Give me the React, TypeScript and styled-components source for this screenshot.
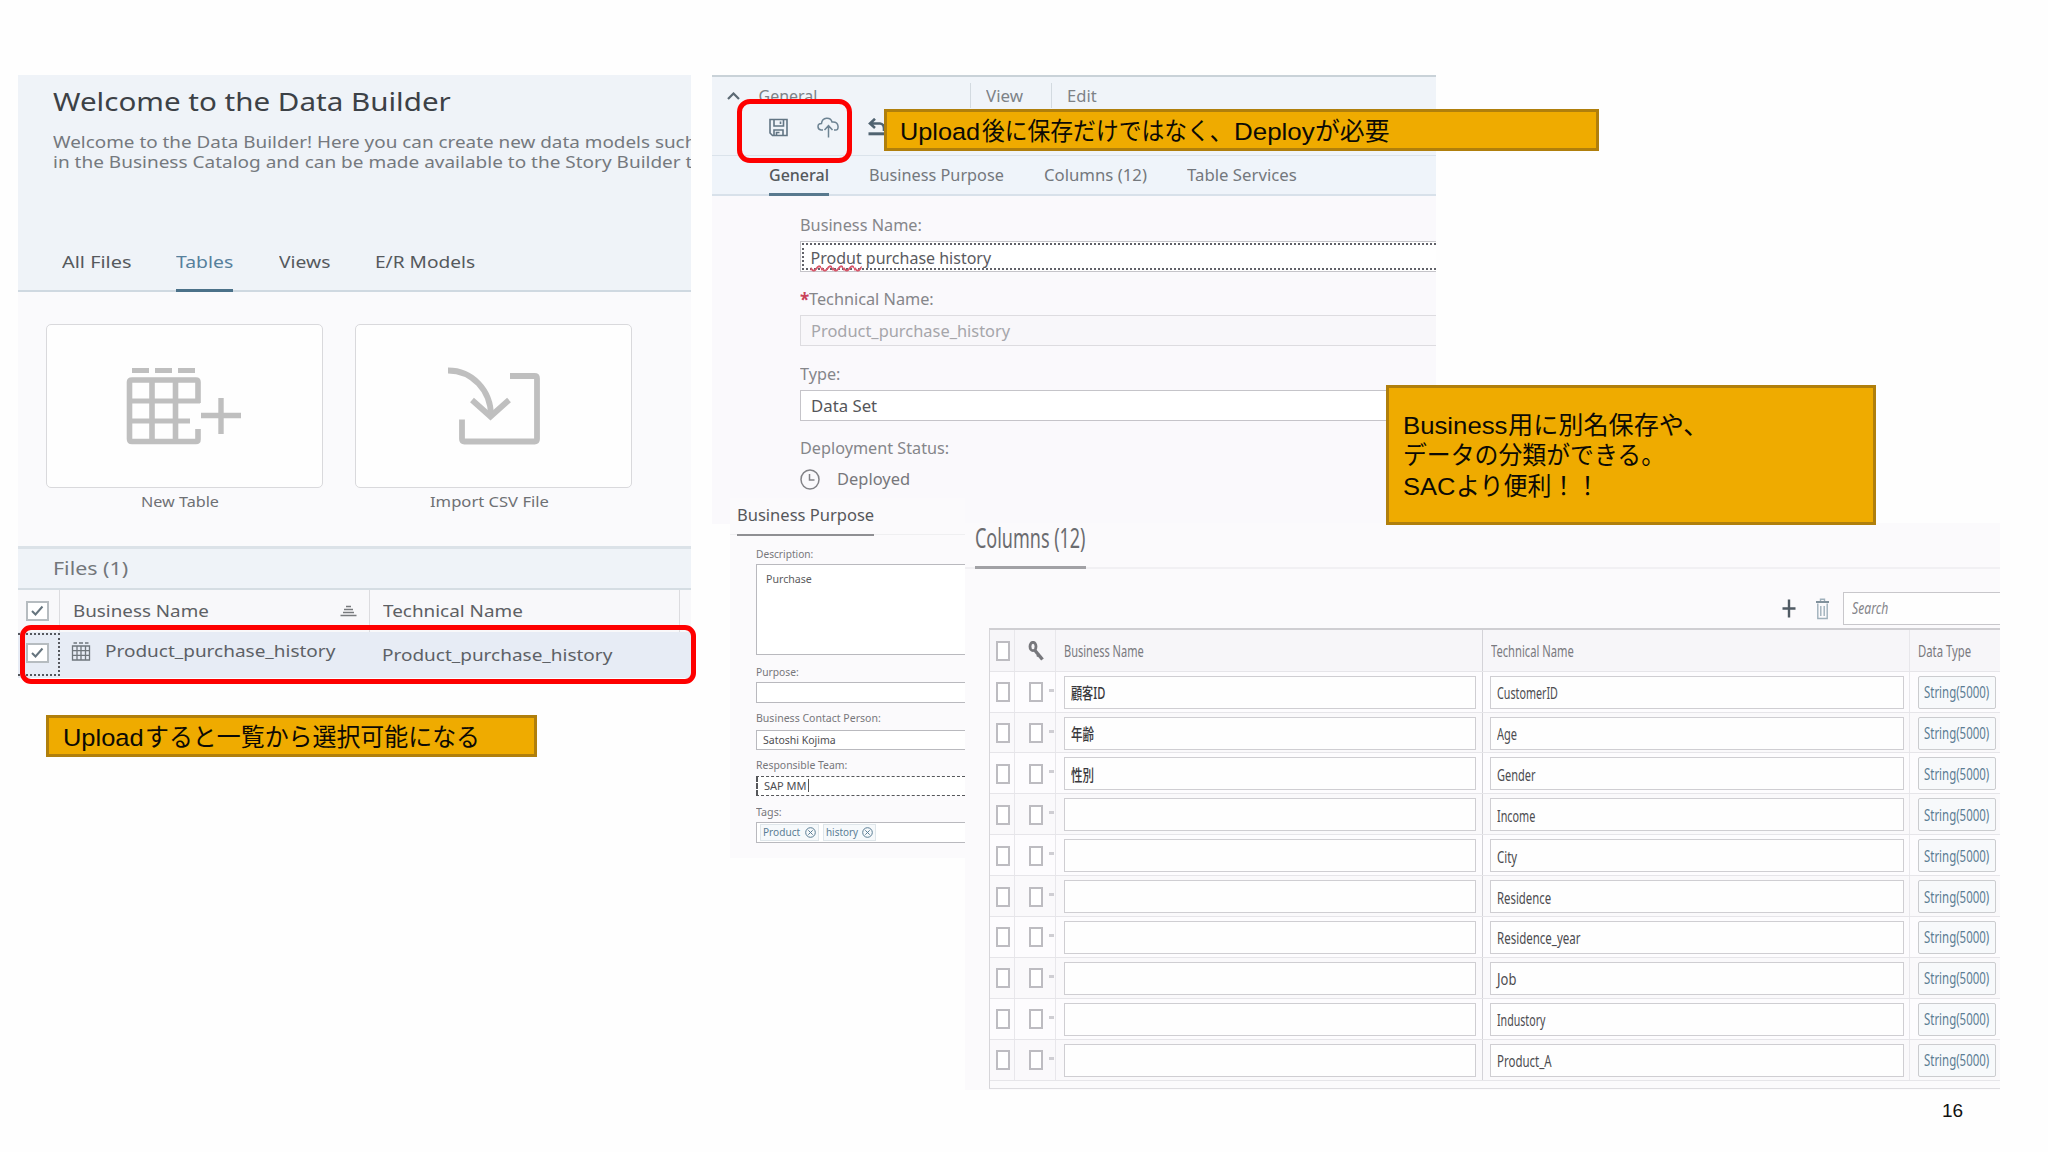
import React, { useLayoutEffect, useRef, useState } from "react";
import styled, { createGlobalStyle, css } from "styled-components";

const Global = createGlobalStyle`
  * { box-sizing: border-box; }
  html, body { margin: 0; padding: 0; background: #fefefe; overflow: hidden; }
`;

const UI_FONT = `"Noto Sans", "Noto Sans CJK JP", sans-serif`;
const NOTE_FONT = `"Liberation Sans", "Noto Sans CJK JP", sans-serif`;

/* ---------- stretched text ---------- */

const FitBox = styled.span<{ $w: number; $size: number; $lh: number; $color?: string; $weight?: number; $italic?: boolean }>`
  display: block;
  flex: none;
  width: ${(p) => p.$w}px;
  height: ${(p) => p.$lh}px;
  line-height: ${(p) => p.$lh}px;
  font-size: ${(p) => p.$size}px;
  font-weight: ${(p) => p.$weight ?? 400};
  font-style: ${(p) => (p.$italic ? "italic" : "normal")};
  ${(p) => p.$color && css`color: ${p.$color};`}
  white-space: nowrap;
`;

const FitInner = styled.span`
  display: inline-block;
  transform-origin: 0 50%;
`;

type FitProps = { w: number; size: number; lh?: number; color?: string; weight?: number; italic?: boolean; children: React.ReactNode };

function Fit({ w, size, lh = 20, color, weight, italic, children }: FitProps) {
  const ref = useRef<HTMLSpanElement>(null);
  const [scale, setScale] = useState(1);
  useLayoutEffect(() => {
    if (ref.current) setScale(w / ref.current.offsetWidth);
  }, [w]);
  return (
    <FitBox $w={w} $size={size} $lh={lh} $color={color} $weight={weight} $italic={italic}>
      <FitInner ref={ref} style={{ transform: `scaleX(${scale})` }}>{children}</FitInner>
    </FitBox>
  );
}

/* ---------- slide canvas ---------- */

const Slide = styled.main`
  position: relative;
  width: 2048px;
  height: 1152px;
  overflow: hidden;
  background: #fefefe;
  font-family: ${UI_FONT};
  color: #55585c;
`;

const Shot = styled.section<{ $x: number; $y: number; $w: number; $h: number; $bg?: string }>`
  position: absolute;
  left: ${(p) => p.$x}px;
  top: ${(p) => p.$y}px;
  width: ${(p) => p.$w}px;
  height: ${(p) => p.$h}px;
  background: ${(p) => p.$bg ?? "transparent"};
  overflow: hidden;
  display: flex;
  flex-direction: column;
`;

const RedFrame = styled.div<{ $x: number; $y: number; $w: number; $h: number; $r: number }>`
  position: absolute;
  left: ${(p) => p.$x}px;
  top: ${(p) => p.$y}px;
  width: ${(p) => p.$w}px;
  height: ${(p) => p.$h}px;
  border: 5px solid #fe0000;
  border-radius: ${(p) => p.$r}px;
`;

const Note = styled.div<{ $x: number; $y: number; $w: number; $h: number }>`
  position: absolute;
  left: ${(p) => p.$x}px;
  top: ${(p) => p.$y}px;
  width: ${(p) => p.$w}px;
  height: ${(p) => p.$h}px;
  padding: 3px 0 0 13.5px;
  display: flex;
  flex-direction: column;
  justify-content: center;
  background: #efab00;
  border: 3px solid #b07f0c;
  color: #0c0a05;
  font-family: ${NOTE_FONT};
`;

const NoteLine = styled.div`
  display: flex;
  align-items: center;
  gap: 1px;
  height: 30.6px;
`;

const PageNumber = styled.div`
  position: absolute;
  left: 1942px;
  top: 1100px;
  font: 19px/22px ${NOTE_FONT};
  color: #111;
`;

/* ---------- data builder ---------- */

const BuilderHead = styled.header`
  display: flex;
  flex-direction: column;
  height: 217px;
  padding: 8px 0 0 35px;
  background: #eff3f8;
  border-bottom: 2px solid #cfd9e1;
`;

const Intro = styled.div`
  margin-top: 12.5px;
`;

const BuilderTabs = styled.nav`
  display: flex;
  gap: 45.6px;
  margin: auto 0 -2px 9px;
`;

const BuilderTab = styled.div<{ $on?: boolean }>`
  height: 51px;
  border-bottom: 3px solid ${(p) => (p.$on ? "#4b7189" : "transparent")};
  color: ${(p) => (p.$on ? "#56809c" : "#55595d")};
`;

const Tiles = styled.div`
  display: flex;
  gap: 32px;
  height: 254px;
  padding: 32px 0 0 28.5px;
  background: #fafafc;
`;

const Tile = styled.div`
  display: flex;
  flex-direction: column;
  align-items: center;
  gap: 3.6px;
  width: 277px;
`;

const TileCard = styled.div`
  display: flex;
  align-items: center;
  justify-content: center;
  width: 100%;
  height: 164px;
  padding-right: 2px;
  background: #fefefe;
  border: 1.5px solid #d9d9dc;
  border-radius: 5px;
`;

const TileLabel = styled.div`
  margin-left: -8px;
`;

const FilesBar = styled.div`
  display: flex;
  align-items: center;
  height: 44px;
  padding: 0 0 2px 35px;
  background: #eff3f8;
  border-top: 3px solid #dbe2e8;
  border-bottom: 2px solid #d5dde3;
`;

const FileRow = styled.div<{ $selected?: boolean }>`
  display: grid;
  grid-template-columns: 42px 310px 310px 10px;
  height: ${(p) => (p.$selected ? 46 : 42)}px;
  background: ${(p) => (p.$selected ? "#e7ecf5" : "#f8f8fa")};
`;

const FileCell = styled.div<{ $line?: boolean; $pad?: number; $lift?: number; $focus?: boolean }>`
  display: flex;
  align-items: center;
  padding: 0 0 ${(p) => p.$lift ?? 0}px ${(p) => p.$pad ?? 0}px;
  border-right: 1px solid ${(p) => (p.$line ? "#dcdcdf" : "transparent")};
  ${(p) => p.$focus && css`
    height: 43px;
    margin-top: 1px;
    padding-bottom: 3px;
    border: 2px dotted #55585e;
    border-left: none;
  `}
`;

const Spacer = styled.i<{ $w: number }>`
  flex: none;
  width: ${(p) => p.$w}px;
`;

const FileCheck = styled.span`
  display: flex;
  align-items: center;
  justify-content: center;
  width: 23px;
  height: 20px;
  margin-left: 8px;
  background: #fff;
  border: 2px solid #b6bcc0;
`;

/* ---------- table editor ---------- */

const Ribbon = styled.div`
  height: 81px;
  background: #f0f4f9;
  border-top: 2px solid #c9d2d8;
  border-bottom: 1px solid #dbe3eb;
`;

const RibbonTitles = styled.div`
  display: flex;
  align-items: center;
  height: 37px;
  color: #7d8287;
`;

const RibbonGroup = styled.div<{ $w: number; $pad: number; $line?: boolean }>`
  display: flex;
  align-items: center;
  gap: 19px;
  width: ${(p) => p.$w}px;
  height: 25px;
  padding-left: ${(p) => p.$pad}px;
  border-left: 1px solid ${(p) => (p.$line ? "#d3dae0" : "transparent")};
`;

const RibbonTools = styled.div`
  display: flex;
  align-items: center;
  height: 26px;
  padding-left: 57px;
  gap: 29px;
`;

const EditorTabs = styled.nav`
  display: flex;
  gap: 40.2px;
  height: 39.5px;
  padding-left: 57.5px;
  background: #eff4fa;
  border-bottom: 2.5px solid #d8e1ea;
`;

const EditorTab = styled.div<{ $on?: boolean }>`
  height: 39.5px;
  padding-top: 0.5px;
  border-bottom: 3px solid ${(p) => (p.$on ? "#58798e" : "transparent")};
  color: ${(p) => (p.$on ? "#54585c" : "#74787d")};
`;

const Form = styled.div`
  padding: 18.8px 0 0 88px;
`;

const Field = styled.div`
  height: 74.2px;
  color: #85868a;
`;

const FieldLabel = styled.div`
  display: flex;
  margin-bottom: 5px;
`;

const Input = styled.div<{ $kind?: "focus" | "off" }>`
  display: flex;
  align-items: center;
  height: 31px;
  padding: 1px 0 0 10px;
  background: ${(p) => (p.$kind === "off" ? "#f8f7fa" : "#fff")};
  border: 1.5px solid ${(p) => (p.$kind === "off" ? "#dddce0" : "#c5c4c9")};
  border-right: none;
  ${(p) => p.$kind === "focus" && css`
    outline: 2px dotted #606168;
    outline-offset: -4px;
    margin-right: -6px;
    padding-top: 2px;
  `}
`;

const Misspelt = styled.span`
  text-decoration: underline wavy #d9576b 1.5px;
  text-underline-offset: 1px;
  text-decoration-skip-ink: none;
`;

const Status = styled.div`
  display: flex;
  align-items: center;
  gap: 17px;
  height: 31px;
`;

/* ---------- business purpose ---------- */

const PurposeHead = styled.div`
  display: flex;
  height: 37.5px;
  padding-left: 7px;
  background: linear-gradient(#efeff1, #efeff1) 0 35.5px / 100% 1px no-repeat;
`;

const Underlined = styled.div<{ $h: number; $line: number; $color: string; $top?: number }>`
  height: ${(p) => p.$h}px;
  padding-top: ${(p) => p.$top ?? 0}px;
  border-bottom: ${(p) => p.$line}px solid ${(p) => p.$color};
`;

const PurposeForm = styled.div`
  padding: 10px 0 0 26px;
  color: #77777b;
`;

const PurposeField = styled.div<{ $first?: boolean }>`
  display: flex;
  flex-direction: column;
  gap: 2.6px;
  height: ${(p) => (p.$first ? 118.2 : 46.7)}px;
`;

const SmallInput = styled.div<{ $area?: boolean; $focus?: boolean }>`
  display: flex;
  align-items: ${(p) => (p.$area ? "flex-start" : "center")};
  height: ${(p) => (p.$area ? 91 : 20.5)}px;
  padding: ${(p) => (p.$area ? "4px 0 0 9px" : "0 0 0 6px")};
  background: #fff;
  border: 1px ${(p) => (p.$focus ? "dashed #55565a" : "solid #b9b9be")};
  border-right: none;
  ${(p) => p.$focus && css`border-width: 1.5px 0 1.5px 2px;`}
`;

const Token = styled.span<{ $w: number }>`
  display: flex;
  align-items: center;
  justify-content: center;
  gap: 4px;
  width: ${(p) => p.$w}px;
  height: 17px;
  margin: 0 4px 0 -3px;
  background: #f6f9fb;
  border: 1px solid #dfe6ea;
  color: #5a7d94;
  & + & { margin-left: 0; }
`;

const Caret = styled.i`
  width: 1px;
  height: 13px;
  margin-left: 1px;
  background: #555;
`;

/* ---------- columns ---------- */

const ColumnsHead = styled.div`
  flex: none;
  height: 46px;
  padding-left: 10px;
  display: flex;
  background: linear-gradient(#f1f0f3, #f1f0f3) 0 44px / 100% 2px no-repeat;
`;

const ColumnsTools = styled.div`
  flex: none;
  display: flex;
  align-items: center;
  justify-content: flex-end;
  height: 58.5px;
  padding-top: 20.5px;
`;

const SearchBox = styled.div`
  display: flex;
  align-items: center;
  width: 157px;
  height: 33px;
  margin-left: 14px;
  padding: 0 0 1px 8px;
  background: #fefefe;
  border: 1.5px solid #c8c7cb;
  border-right: none;
`;

const Grid = styled.div`
  margin-left: 24px;
  height: 461px;
  border-left: 1.5px solid #d6d5d9;
  border-top: 2.5px solid #cfced2;
  border-bottom: 1px solid #dddce0;
`;

const GridRow = styled.div<{ $head?: boolean; $alt?: boolean }>`
  display: grid;
  grid-template-columns: 25px 41px 427px 427px 91px;
  height: ${(p) => (p.$head ? 42.2 : 40.9)}px;
  background: ${(p) => (p.$head ? "#f7f6f9" : p.$alt ? "#faf9fb" : "#fdfcfe")};
  border-bottom: 1.5px solid #e6e5e9;
`;

const GridCell = styled.div<{ $pad: number; $strong?: boolean; $last?: boolean }>`
  display: flex;
  align-items: center;
  padding: 1px 0 0 ${(p) => p.$pad}px;
  border-right: ${(p) => (p.$last ? "none" : `1.5px solid ${p.$strong ? "#d4d3d8" : "#e8e7eb"}`)};
`;

const GridCheck = styled.span`
  flex: none;
  width: 14px;
  height: 20px;
  background: #fff;
  border: 2px solid #bdbcc1;
`;

const Tick = styled.i`
  width: 5px;
  height: 3px;
  margin: -4px 0 0 6px;
  background: #cfced3;
`;

const GridInput = styled.div<{ $w: number }>`
  display: flex;
  align-items: center;
  width: ${(p) => p.$w}px;
  height: 33px;
  padding: 2px 0 0 6px;
  background: #fefefe;
  border: 1.5px solid #cfced2;
  color: #4c4c50;
`;

const TypeButton = styled.div`
  display: flex;
  align-items: center;
  width: 77.5px;
  height: 33px;
  padding-left: 5px;
  background: #f7f9fb;
  border: 1.5px solid #cbcccf;
  border-radius: 2px;
  color: #5b7c93;
`;

/* ---------- icons ---------- */

const NewTableIcon = () => (
  <svg width="116" height="78" viewBox="127 365 116 78" fill="none" stroke="#bfbfbf">
    <path d="M133 368.500h17M156 368.500h17M179 368.500h17" strokeWidth="5" />
    <path d="M199 401V380q0-2-2-2H133q-2.500 0-2.500 2V437q0 2.500 2.500 2.500H197q2 0 2-2V427" strokeWidth="5.600" />
    <path d="M153 378v61M176.500 378v61" strokeWidth="5.600" />
    <path d="M131 399h70M131 419h60" strokeWidth="4.800" />
    <path d="M202 413.500h40M222 396v36" strokeWidth="5.400" />
  </svg>
);

const ImportIcon = () => (
  <svg width="94" height="78" viewBox="446 367 94 78" fill="none" stroke="#bfbfbf" strokeWidth="5.800">
    <path d="M448 370.500C472 370.500 491 390 491 416" />
    <path d="M472 400L490.500 416.500L509 400" />
    <path d="M510 376H534.500q2.500 0 2.500 2.500V439q0 2.500-2.500 2.500H464.500q-2.500 0-2.500-2.500V419.500" />
  </svg>
);

const CheckMark = () => (
  <svg width="15" height="12" viewBox="0 0 15 12" fill="none" stroke="#65747e" strokeWidth="2">
    <path d="M2 6L5.500 9.500L12.500 1.500" />
  </svg>
);

const SortIcon = () => (
  <svg width="17" height="12" viewBox="0 0 17 12" stroke="#777a7d" strokeWidth="1.300">
    <path d="M6 1.500h5M4 4.500h9M3 7.500h11M0.500 10.500h16" />
  </svg>
);

const TableIcon = () => (
  <svg width="20" height="20" viewBox="0 0 20 20" fill="none" stroke="#6f767c" strokeWidth="1.300">
    <path d="M1.500 5h17v14h-17zM1.500 9.700h17M1.500 14.300h17M6 5v14M10 5v14M14.500 5v14M2.500 2h3.500M8 2h4M14 2h3.500" />
  </svg>
);

const ChevronIcon = () => (
  <svg width="13" height="8" viewBox="0 0 13 8" fill="none" stroke="#5c6a74" strokeWidth="2.200">
    <path d="M1 7L6.500 1.500L12 7" />
  </svg>
);

const SaveIcon = () => (
  <svg width="19" height="19" viewBox="0 0 19 19" fill="none" stroke="#627584" strokeWidth="1.600">
    <path d="M1 1.500h17v16H3.500L1 15zM5 1.500v6.500h9.500V1.500M5 17.500v-5.500h9v5.500M11.500 3.500v2.500M7.500 17v-2.500h3" />
  </svg>
);

const DeployIcon = () => (
  <svg width="22" height="21" viewBox="0 0 22 21" fill="none" stroke="#6d8393" strokeWidth="1.500">
    <path d="M6 13H4Q1 12.500 1 9.500T4.500 6.500Q5 1.500 9.500 1.200T15 5Q20.500 4.500 21 9T18 13H17M11.500 20.500V9M7.500 13L11.500 8.700L15.500 13" />
  </svg>
);

const UndoIcon = () => (
  <svg width="18" height="18" viewBox="0 0 18 18" fill="none" stroke="#506371">
    <path d="M7 0.800L2 5.500L7 10M2 5.500H12Q16 6 16 10.500V13" strokeWidth="2.600" />
    <path d="M0.500 15.800H18" strokeWidth="3" />
  </svg>
);

const ClockIcon = () => (
  <svg width="20" height="21" viewBox="0 0 20 21" fill="none" stroke="#828287" strokeWidth="1.500">
    <ellipse cx="10" cy="10.500" rx="9" ry="9.500" />
    <path d="M9.500 5v6h5" />
  </svg>
);

const RemoveIcon = () => (
  <svg width="11" height="11" viewBox="0 0 11 11" fill="none" stroke="#5a7d94">
    <circle cx="5.500" cy="5.500" r="4.800" />
    <path d="M3.300 3.300l4.400 4.400M7.700 3.300L3.300 7.700" />
  </svg>
);

const PlusIcon = () => (
  <svg width="14" height="19" viewBox="0 0 14 19" stroke="#505b64" strokeWidth="2.400">
    <path d="M0.500 9.500h13M7 0.500v18" />
  </svg>
);

const TrashIcon = () => (
  <svg width="13" height="22" viewBox="0 0 13 22" fill="none" stroke="#9fb0bb" strokeWidth="1.400">
    <path d="M0 4h13" stroke="#81919c" strokeWidth="2" />
    <path d="M4.500 3V1.200h4V3M1.800 5.500v15h9.400v-15M4.800 8v10M8.200 8v10" />
  </svg>
);

const KeyIcon = () => (
  <svg width="16" height="20" viewBox="0 0 16 20" fill="none" stroke="#77777c">
    <ellipse cx="5" cy="5.500" rx="3" ry="4.200" strokeWidth="2.800" />
    <path d="M7 9.500L14.500 18.500" strokeWidth="3.400" />
    <path d="M9 15.500l2-2.500" strokeWidth="2" />
  </svg>
);

/* ---------- data ---------- */

type Row = { business?: [string, number]; tech: [string, number] };

const rows: Row[] = [
  { business: ["顧客ID", 34], tech: ["CustomerID", 61] },
  { business: ["年齢", 23], tech: ["Age", 20] },
  { business: ["性別", 23], tech: ["Gender", 38.5] },
  { tech: ["Income", 38.5] },
  { tech: ["City", 20] },
  { tech: ["Residence", 54] },
  { tech: ["Residence_year", 83.5] },
  { tech: ["Job", 19.5] },
  { tech: ["Industory", 48.5] },
  { tech: ["Product_A", 54.5] },
];

const DataBuilder = () => (
  <Shot $x={17.5} $y={75} $w={673} $h={603}>
    <BuilderHead>
      <Fit w={398} size={26} lh={36} color="#3c4146">Welcome to the Data Builder</Fit>
      <Intro>
        <Fit w={643} size={17} lh={20.5} color="#75797e">Welcome to the Data Builder! Here you can create new data models such</Fit>
        <Fit w={639} size={17} lh={20.5} color="#75797e">in the Business Catalog and can be made available to the Story Builder t</Fit>
      </Intro>
      <BuilderTabs>
        <BuilderTab><Fit w={69} size={17} lh={41}>All Files</Fit></BuilderTab>
        <BuilderTab $on><Fit w={57} size={17} lh={41}>Tables</Fit></BuilderTab>
        <BuilderTab><Fit w={51} size={17} lh={41}>Views</Fit></BuilderTab>
        <BuilderTab><Fit w={100} size={17} lh={41}>E/R Models</Fit></BuilderTab>
      </BuilderTabs>
    </BuilderHead>
    <Tiles>
      <Tile>
        <TileCard><NewTableIcon /></TileCard>
        <TileLabel><Fit w={78.5} size={14} color="#6e7074">New Table</Fit></TileLabel>
      </Tile>
      <Tile>
        <TileCard><ImportIcon /></TileCard>
        <TileLabel><Fit w={118.5} size={14} color="#6e7074">Import CSV File</Fit></TileLabel>
      </Tile>
    </Tiles>
    <FilesBar><Fit w={75} size={18} color="#73777b">Files (1)</Fit></FilesBar>
    <FileRow>
      <FileCell $line><FileCheck><CheckMark /></FileCheck></FileCell>
      <FileCell $line $pad={13}>
        <Fit w={136} size={17} color="#5d6064">Business Name</Fit>
        <Spacer $w={131} />
        <SortIcon />
      </FileCell>
      <FileCell $line $pad={13.5}><Fit w={140} size={17} color="#5d6064">Technical Name</Fit></FileCell>
    </FileRow>
    <FileRow $selected>
      <FileCell $focus><FileCheck><CheckMark /></FileCheck></FileCell>
      <FileCell $pad={11.5} $lift={9}>
        <TableIcon />
        <Spacer $w={14} />
        <Fit w={230} size={17} color="#5d6166">Product_purchase_history</Fit>
      </FileCell>
      <FileCell $pad={12.5} $lift={1}><Fit w={230} size={17} color="#5d6166">Product_purchase_history</Fit></FileCell>
    </FileRow>
  </Shot>
);

const TableEditor = () => (
  <Shot $x={711.5} $y={75} $w={724.5} $h={449} $bg="#faf9fc">
    <Ribbon>
      <RibbonTitles>
        <RibbonGroup $w={258.5} $pad={14}><ChevronIcon /><Fit w={59} size={16}>General</Fit></RibbonGroup>
        <RibbonGroup $w={80.5} $pad={15} $line><Fit w={37} size={16}>View</Fit></RibbonGroup>
        <RibbonGroup $w={200} $pad={15} $line><Fit w={30} size={16}>Edit</Fit></RibbonGroup>
      </RibbonTitles>
      <RibbonTools><SaveIcon /><DeployIcon /><UndoIcon /></RibbonTools>
    </Ribbon>
    <EditorTabs>
      <EditorTab $on><Fit w={60} size={16} lh={37} weight={500}>General</Fit></EditorTab>
      <EditorTab><Fit w={135} size={16} lh={37}>Business Purpose</Fit></EditorTab>
      <EditorTab><Fit w={102.5} size={16} lh={37}>Columns (12)</Fit></EditorTab>
      <EditorTab><Fit w={110} size={16} lh={37}>Table Services</Fit></EditorTab>
    </EditorTabs>
    <Form>
      <Field>
        <FieldLabel><Fit w={122} size={16} lh={22}>Business Name:</Fit></FieldLabel>
        <Input $kind="focus"><Fit w={181} size={16} color="#5a5b5f"><Misspelt>Produt</Misspelt> purchase history</Fit></Input>
      </Field>
      <Field>
        <FieldLabel>
          <Fit w={9.5} size={18} lh={22} color="#c9435a" weight={700}>*</Fit>
          <Fit w={125} size={16} lh={22}>Technical Name:</Fit>
        </FieldLabel>
        <Input $kind="off"><Fit w={199} size={16} color="#a6a6aa">Product_purchase_history</Fit></Input>
      </Field>
      <Field>
        <FieldLabel><Fit w={40.5} size={16} lh={22}>Type:</Fit></FieldLabel>
        <Input><Fit w={66} size={16} color="#55565a">Data Set</Fit></Input>
      </Field>
      <Field>
        <FieldLabel><Fit w={149} size={16} lh={22}>Deployment Status:</Fit></FieldLabel>
        <Status><ClockIcon /><Fit w={73} size={16} lh={22} color="#77777b">Deployed</Fit></Status>
      </Field>
    </Form>
  </Shot>
);

const BusinessPurpose = () => (
  <Shot $x={730} $y={498} $w={235} $h={360} $bg="#fbfafc">
    <PurposeHead>
      <Underlined $h={37.5} $line={2} $color="#8f8f93">
        <Fit w={137} size={17} lh={33} color="#56575b">Business Purpose</Fit>
      </Underlined>
    </PurposeHead>
    <PurposeForm>
      <PurposeField $first>
        <Fit w={57} size={10.5} lh={16}>Description:</Fit>
        <SmallInput $area><Fit w={45.5} size={10.5} color="#5c5c60">Purchase</Fit></SmallInput>
      </PurposeField>
      <PurposeField>
        <Fit w={43} size={10.5} lh={16}>Purpose:</Fit>
        <SmallInput />
      </PurposeField>
      <PurposeField>
        <Fit w={124.5} size={10.5} lh={17}>Business Contact Person:</Fit>
        <SmallInput><Fit w={73} size={10.5} color="#4e4e52">Satoshi Kojima</Fit></SmallInput>
      </PurposeField>
      <PurposeField>
        <Fit w={91.5} size={10.5} lh={16}>Responsible Team:</Fit>
        <SmallInput $focus><Fit w={43} size={10.5} color="#4e4e52">SAP MM</Fit><Caret /></SmallInput>
      </PurposeField>
      <PurposeField>
        <Fit w={25.5} size={10.5} lh={16}>Tags:</Fit>
        <SmallInput>
          <Token $w={59}><Fit w={37.5} size={10.5} lh={15}>Product</Fit><RemoveIcon /></Token>
          <Token $w={53}><Fit w={32} size={10.5} lh={15}>history</Fit><RemoveIcon /></Token>
        </SmallInput>
      </PurposeField>
    </PurposeForm>
  </Shot>
);

const Columns = () => (
  <Shot $x={965} $y={523} $w={1035} $h={567} $bg="#fbfafc">
    <ColumnsHead>
      <Underlined $h={46} $line={3} $color="#a1a1a5" $top={1}>
        <Fit w={110.5} size={27} lh={27} color="#6b6c70">Columns (12)</Fit>
      </Underlined>
    </ColumnsHead>
    <ColumnsTools>
      <PlusIcon />
      <Spacer $w={20} />
      <TrashIcon />
      <SearchBox><Fit w={36.5} size={16} italic color="#85858a">Search</Fit></SearchBox>
    </ColumnsTools>
    <Grid>
      <GridRow $head>
        <GridCell $pad={6}><GridCheck /></GridCell>
        <GridCell $pad={12.5}><KeyIcon /></GridCell>
        <GridCell $pad={7.5} $strong><Fit w={80} size={16} color="#7a7a7f">Business Name</Fit></GridCell>
        <GridCell $pad={7.5}><Fit w={82.5} size={16} color="#7a7a7f">Technical Name</Fit></GridCell>
        <GridCell $pad={8} $last><Fit w={53} size={16} color="#7a7a7f">Data Type</Fit></GridCell>
      </GridRow>
      {rows.map((row, i) => (
        <GridRow key={row.tech[0]} $alt={i % 2 === 1}>
          <GridCell $pad={6}><GridCheck /></GridCell>
          <GridCell $pad={14}><GridCheck /><Tick /></GridCell>
          <GridCell $pad={7.5} $strong>
            <GridInput $w={412}>
              {row.business && <Fit w={row.business[1]} size={16} weight={500} color="#38383c">{row.business[0]}</Fit>}
            </GridInput>
          </GridCell>
          <GridCell $pad={7}>
            <GridInput $w={414}><Fit w={row.tech[1]} size={16}>{row.tech[0]}</Fit></GridInput>
          </GridCell>
          <GridCell $pad={8} $last><TypeButton><Fit w={65} size={16}>String(5000)</Fit></TypeButton></GridCell>
        </GridRow>
      ))}
    </Grid>
  </Shot>
);

export default function App() {
  return (
    <>
      <Global />
      <Slide>
        <DataBuilder />
        <TableEditor />
        <BusinessPurpose />
        <Columns />
        <RedFrame $x={20} $y={625} $w={676} $h={58.5} $r={11} />
        <RedFrame $x={737} $y={99} $w={115} $h={64} $r={13} />
        <Note $x={46} $y={715} $w={491} $h={42}>
          <NoteLine>
            <Fit w={81} size={24.5} lh={30}>Upload</Fit>
            <Fit w={335} size={24.5} lh={30}>すると一覧から選択可能になる</Fit>
          </NoteLine>
        </Note>
        <Note $x={883.5} $y={109} $w={715} $h={42}>
          <NoteLine>
            <Fit w={80.5} size={24.5} lh={30}>Upload</Fit>
            <Fit w={251} size={24.5} lh={30}>後に保存だけではなく、</Fit>
            <Fit w={80.5} size={24.5} lh={30}>Deploy</Fit>
            <Fit w={75} size={24.5} lh={30}>が必要</Fit>
          </NoteLine>
        </Note>
        <Note $x={1386} $y={384.5} $w={490} $h={140.5}>
          <NoteLine>
            <Fit w={104} size={24.5} lh={30}>Business</Fit>
            <Fit w={200} size={24.5} lh={30}>用に別名保存や、</Fit>
          </NoteLine>
          <NoteLine><Fit w={262} size={24.5} lh={30}>データの分類ができる。</Fit></NoteLine>
          <NoteLine>
            <Fit w={52} size={24.5} lh={30}>SAC</Fit>
            <Fit w={144} size={24.5} lh={30}>より便利！！</Fit>
          </NoteLine>
        </Note>
        <PageNumber>16</PageNumber>
      </Slide>
    </>
  );
}
